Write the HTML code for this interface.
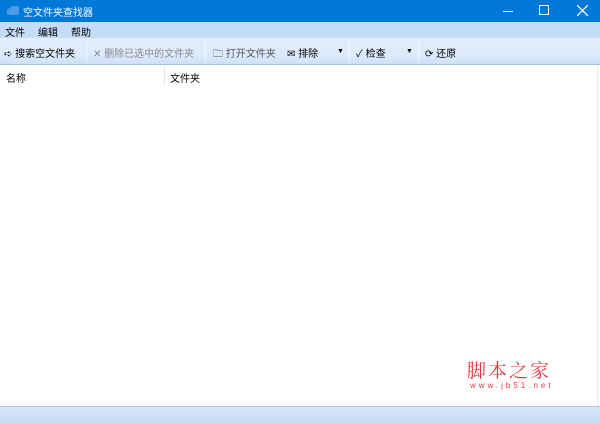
<!DOCTYPE html>
<html><head><meta charset="utf-8"><style>
*{margin:0;padding:0;box-sizing:border-box}
body{width:600px;height:424px;overflow:hidden;background:#fff;font-family:"Liberation Sans","Noto Sans CJK SC",sans-serif;font-size:12px;color:#000;position:relative}
.t{position:absolute;left:0;top:0;width:600px;height:22px;background:#0078d7;color:#fff}
.m{position:absolute;left:0;top:22px;width:600px;height:16px;background:#c4dcf8}
.tb{position:absolute;left:0;top:38px;width:600px;height:27px;background:linear-gradient(#e2eefc,#dbe9fb 70%,#cfe0f6);border-bottom:1px solid #a9c2e0}
.a{position:absolute;white-space:nowrap;font-size:10px}
.sep{position:absolute;top:40px;width:1px;height:22px;background:#b5cdea;border-right:1px solid #f2f7fd}
.sb{position:absolute;left:0;top:406px;width:600px;height:18px;background:linear-gradient(#d9e7f9,#c6dbf5);border-top:1px solid #aac3e3}
</style></head><body>
<div class="t">
<svg style="position:absolute;left:6px;top:4px" width="14" height="14"><path d="M1 6 L6 2 H13 V11 H1Z" fill="#4a9ae6"/></svg>
<span class="a" style="left:23px;top:4px;color:#fff">空文件夹查找器</span>
<div style="position:absolute;left:503px;top:11px;width:10px;height:1px;background:#fff"></div>
<div style="position:absolute;left:539px;top:5px;width:10px;height:10px;border:1px solid #fff"></div>
<svg style="position:absolute;left:577px;top:5px" width="11" height="11"><path d="M0 0L11 11M11 0L0 11" stroke="#fff" stroke-width="1.2"/></svg>
</div>
<div class="m">
<span class="a" style="left:5px;top:2px">文件</span>
<span class="a" style="left:38px;top:2px">编辑</span>
<span class="a" style="left:71px;top:2px">帮助</span>
</div>
<div class="tb"></div>
<span class="a" style="left:4px;top:45px">➪ 搜索空文件夹</span>
<div class="sep" style="left:86px"></div>
<span class="a" style="left:93px;top:45px;color:#8a8a8a">✕ 删除已选中的文件夹</span>
<div class="sep" style="left:205px"></div>
<span class="a" style="left:213px;top:45px;color:#555">🗀 打开文件夹</span>
<span class="a" style="left:287px;top:45px">✉ 排除</span>
<span class="a" style="left:337px;top:48px;font-size:7px">▼</span>
<div class="sep" style="left:349px"></div>
<span class="a" style="left:356px;top:45px">✓ 检查</span>
<span class="a" style="left:406px;top:48px;font-size:7px">▼</span>
<div class="sep" style="left:418px"></div>
<span class="a" style="left:425px;top:45px">⟳ 还原</span>
<span class="a" style="left:6px;top:70px">名称</span>
<div style="position:absolute;left:164px;top:66px;width:1px;height:19px;background:#e5e5e5"></div>
<span class="a" style="left:170px;top:70px">文件夹</span>
<div style="position:absolute;left:597px;top:66px;width:1px;height:340px;background:#e8e8e8"></div>
<span class="a" style="left:467px;top:356px;color:#e8383d;font-size:19px;font-family:'Noto Serif CJK SC',serif;letter-spacing:2px">脚本之家</span>
<span class="a" style="left:470px;top:381px;color:#e8383d;font-size:8px;letter-spacing:3px">www.jb51.net</span>
<div class="sb"></div>
</body></html>
